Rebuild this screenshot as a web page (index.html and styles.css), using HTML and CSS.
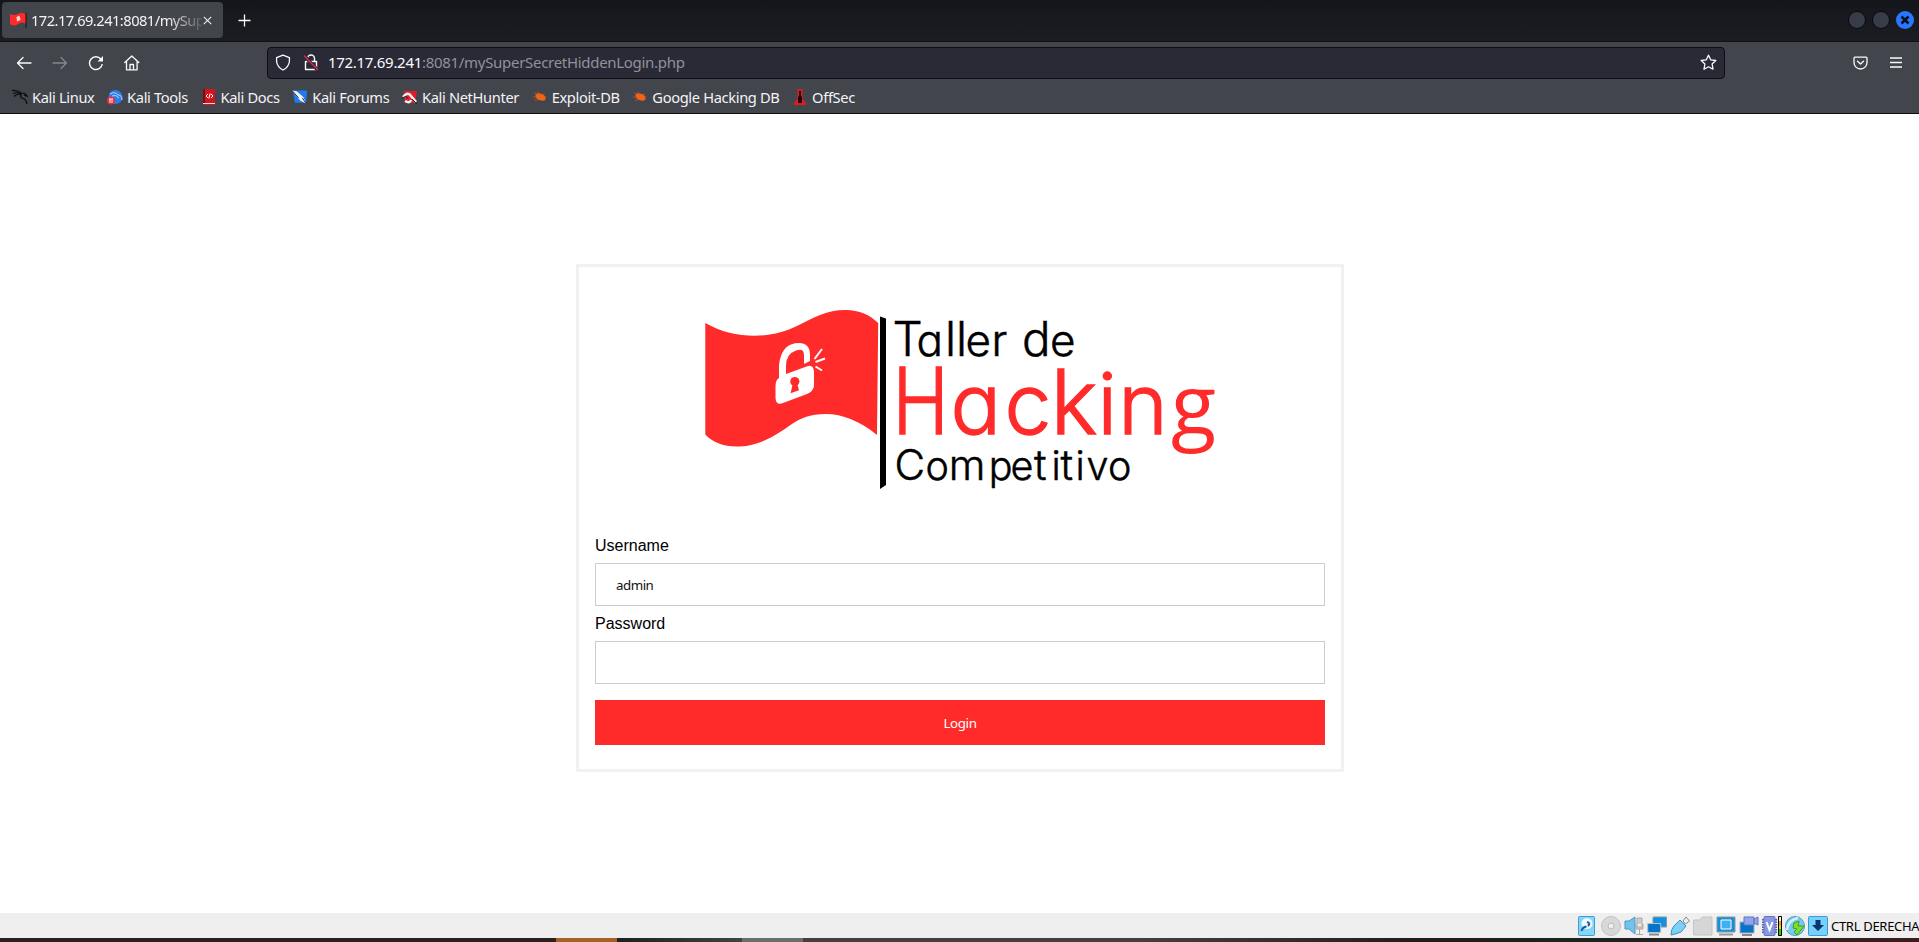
FILE: index.html
```html
<!DOCTYPE html>
<html lang="es">
<head>
<meta charset="utf-8">
<title>Taller de Hacking Competitivo</title>
<link rel="stylesheet" href="styles.css">
</head>
<body>
<header class="titlebar">
  <div class="tab">
    <svg class="favicon" width="17" height="17" viewBox="0 0 17 17"><path d="M0 2Q5 4 8 2T16 2V12Q12 9 8 12T0 12Z" fill="#ff2b2b"/><path d="M16 1V16" stroke="#111"/><path d="M6.500 5.500q2-3 3.500-.5l.5 3-3.500 1.500z" fill="#ffd0d0"/></svg>
    <span class="tab-title">172.17.69.241:8081/mySup</span>
    <svg class="tab-close" width="9" height="9" viewBox="0 0 9 9"><path d="M.8.8l7.400 7.400M8.200.8L.8 8.200" stroke="#e8e8ea" stroke-width="1.200"/></svg>
  </div>
  <svg class="newtab" width="13" height="13" viewBox="0 0 13 13"><path d="M6.500.5v12M.5 6.500h12" stroke="#fbfbfe" stroke-width="1.300"/></svg>
  <div class="window-buttons">
    <i class="dot"></i><i class="dot"></i>
    <svg width="18" height="18" viewBox="0 0 18 18"><circle cx="9" cy="9" r="9" fill="#2777ff"/><path d="M5.500 5.500l7 7M12.500 5.500l-7 7" stroke="#0b1020" stroke-width="2.600"/></svg>
  </div>
</header>
<nav class="toolbar">
  <div class="nav-icons">
    <svg width="16" height="16" viewBox="0 0 16 16" fill="none" stroke="#fbfbfe" stroke-width="1.300" stroke-linecap="round" stroke-linejoin="round"><path d="M15 8H1.500M7 2.500L1.500 8 7 13.500"/></svg>
    <svg width="16" height="16" viewBox="0 0 16 16" fill="none" stroke="#85868b" stroke-width="1.300" stroke-linecap="round" stroke-linejoin="round"><path d="M1 8h13.500M9 2.500L14.500 8 9 13.500"/></svg>
    <svg width="16" height="16" viewBox="0 0 16 16" fill="none" stroke="#fbfbfe" stroke-width="1.400"><path d="M13 4.200A6.400 6.400 0 1 0 14.300 9"/><path d="M15 1v5.500H9.500z" fill="#fbfbfe" stroke="none"/></svg>
    <svg width="16" height="16" viewBox="0 0 16 16" fill="none" stroke="#fbfbfe" stroke-width="1.300" stroke-linejoin="round" stroke-linecap="round"><path d="M.8 7.500L7.800 1l7 6.500M2.500 6.500v8.300h10.600V6.500M6 14.500V9.500h3.500v5"/></svg>
  </div>
  <div class="urlbar">
    <svg width="16" height="17" viewBox="0 0 16 17" fill="none" stroke="#fbfbfe" stroke-width="1.300"><path d="M8 1.200L14.400 3.600V7.500Q13.800 13 8 16 2.200 13 1.600 7.500V3.600Z" stroke-linejoin="round"/></svg>
    <svg class="lock" width="16" height="17" viewBox="0 0 16 17" fill="none" stroke="#fbfbfe" stroke-width="1.400"><path d="M4.500 7V4.500a3.500 3.500 0 0 1 7 0V7M2.500 7.500h11v8h-11z" stroke-linejoin="round"/><path d="M1 1.500L14.500 16" stroke="#292a36" stroke-width="3.400"/><path d="M1 1.500L15 16" stroke="#e22850" stroke-width="1.400"/></svg>
    <span class="url"><b>172.17.69.241</b>:8081/mySuperSecretHiddenLogin.php</span>
    <svg class="star" width="17" height="17" viewBox="0 0 17 17" fill="none" stroke="#fbfbfe" stroke-width="1.300" stroke-linejoin="round"><path d="M8.500 1.200L10.700 5.800 15.800 6.500 12.100 10 13 15.200 8.500 12.700 4 15.200 4.900 10 1.200 6.500 6.300 5.800Z"/></svg>
  </div>
  <svg class="pocket" width="15" height="14" viewBox="0 0 15 14" fill="none" stroke="#fbfbfe" stroke-width="1.300" stroke-linecap="round" stroke-linejoin="round"><path d="M2 1.200h11q1 0 1 1V6.500a6.500 6.500 0 0 1-13 0V2.200q0-1 1-1zM4.500 5.200l3 2.800 3-2.800"/></svg>
  <svg class="burger" width="12" height="11" viewBox="0 0 12 11"><path d="M0 1h12M0 5.500h12M0 10h12" stroke="#fbfbfe" stroke-width="1.300"/></svg>
</nav>
<div class="bookmarks">
  <a><svg width="16" height="16" viewBox="0 0 16 16" fill="none" stroke="#0b0b0d" stroke-width="1.200"><path d="M0 1.500q5-.5 9 2.500M1 4.500q4-1.500 8 0M2 7.500q3-3 7-2-1 3.500 2 4t4 5.500M9 4l4 .5 2 2.500-3-.8"/></svg><span>Kali Linux</span></a>
  <a><svg width="16" height="16" viewBox="0 0 16 16"><circle cx="8.500" cy="8" r="7" fill="#2b7de9"/><path d="M3 5q5-3 8 1 4 0 4 5M5 7q4-2 7 2" fill="none" stroke="#b8d8ff"/><circle cx="4" cy="11.500" r="4" fill="#e5303c"/><path d="M2 10h4M3 10V14M5 10V14" stroke="#fff" stroke-width=".9"/></svg><span>Kali Tools</span></a>
  <a><svg width="16" height="16" viewBox="-1 0 16 16"><path d="M1 0h12v16H1z" fill="#d4131d"/><path d="M1 0h2v14H1z" fill="#7e0c13"/><path d="M1 14h12V15H1z" fill="#ddd"/><path d="M6 5L4 7l2 2M9 5L11 7 9 9M8.200 4.500L6.800 9.500" fill="none" stroke="#fff"/></svg><span>Kali Docs</span></a>
  <a><svg width="16" height="16" viewBox="0 0 17 16"><path d="M1 1h15l-1 13H3z" fill="#1f7cf0"/><path d="M0 1l5 1 7 6 3 7-6-3-6-7z" fill="#f4f4f4"/><path d="M0 1l7 8M11 9l4 6" fill="none" stroke="#222"/></svg><span>Kali Forums</span></a>
  <a><svg width="16" height="16" viewBox="0 0 16 16"><path d="M2 2h13l-2 12H3z" fill="#e11d2c"/><path d="M1 8q5-6 8-1l5 6M3 12q5 3 6-1" fill="none" stroke="#eee" stroke-width="2.600"/><path d="M0 9q4-3 6 0M10 10l5 5" fill="none" stroke="#222"/></svg><span>Kali NetHunter</span></a>
  <a><svg width="16" height="16" viewBox="-1 0 16 16"><ellipse cx="7.500" cy="8" rx="5.500" ry="3.200" transform="rotate(25 7.500 8)" fill="#f06414"/><path d="M1 3.500l3 2M5 2.500l1 3M0 8h4M2 11.500l3-1M9 5.500l3-.5M13 7.500h-2" stroke="#b85b28" stroke-width=".8"/></svg><span>Exploit-DB</span></a>
  <a><svg width="16" height="16" viewBox="-1 0 16 16"><ellipse cx="7.500" cy="8" rx="5.500" ry="3.200" transform="rotate(25 7.500 8)" fill="#f06414"/><path d="M1 3.500l3 2M5 2.500l1 3M0 8h4M2 11.500l3-1M9 5.500l3-.5M13 7.500h-2" stroke="#b85b28" stroke-width=".8"/></svg><span>Google Hacking DB</span></a>
  <a><svg width="16" height="16" viewBox="-1.500 0 16 16"><path d="M4 0h5v9l4 6v1H0v-1l4-6z" fill="#d81e22"/><path d="M5.500 2h2v5l1 1v6h-4V8l1-1z" fill="#250608"/></svg><span>OffSec</span></a>
</div>
<main class="page">
  <form class="login">
    <svg class="logo" width="730" height="253" viewBox="595 283 730 253">
      <path d="M705.300 323C735 340 771 339 797 326C815 317 826 310 846 310C859 310 870 315 878.200 323L877 435C860 421 842 414 826 414C810 414 800 418 789 426C767 442 751 446.500 737 446.500C723 446.500 712 442 705.300 434.500Z" fill="#ff2b2b"/>
      <path d="M880 316.500l6 2v166.500l-6 4z"/>
      <path d="M779 378V365Q781 346 795 343.300Q810 341 810 355V361L804 364V355Q804 348 796 350.500Q786 354 786 366V374L808 366Q813.500 364.500 814 372V386Q813.500 391 807 394L783 403Q776 406 775.500 398V386Q775.500 380 779 378Z" fill="#fff"/>
      <circle cx="794.800" cy="381.500" r="4.600" fill="#ff2b2b"/><path d="M793 383h4l2 7.300-8.500 3z" fill="#ff2b2b"/>
      <path d="M814.500 359L822 349M815.500 362L825 358.500M815.500 366.500L822 370.500" stroke="#fff" stroke-width="2"/>
      <text class="black" font-size="47.500" x="892.500 916.500 945 956 965.500 991.500 1008.500 1022 1050" y="356">T<tspan font-size="44">a</tspan>ll<tspan font-size="44">er</tspan> d<tspan font-size="44">e</tspan></text>
      <text class="red" font-size="91.500" transform="translate(892.500 434.300) scale(.83 1)">H</text>
      <text class="red" font-size="84" x="950.500 1004.500 1050.500 1097.500 1118.300" y="434.300">ac<tspan font-size="89">k</tspan>in</text>
      <text class="red two-storey" font-size="83" x="1171" y="434">g</text>
      <text class="black" font-size="39.500" x="894.500 925.500 948.800 988.800 1010.500 1034 1051.500 1060.500 1075.500 1086.500 1108" y="479.600"><tspan font-size="42">C</tspan>o<tspan font-size="42">m</tspan>pe<tspan font-size="42">t</tspan>i<tspan font-size="42">t</tspan>ivo</text>
    </svg>
    <label>Username</label>
    <div class="field">admin</div>
    <label>Password</label>
    <div class="field"></div>
    <div class="button">Login</div>
  </form>
</main>
<footer class="statusbar">
  <svg width="20" height="20" viewBox="0 0 20 20"><rect x=".5" y=".5" width="16" height="19" rx="1" fill="#86d5f8" stroke="#3a9fd3"/><circle cx="9" cy="7.500" r="5.500" fill="#eef9ff"/><path d="M3.500 15q1-4 5-4.500M9 6q4 1 1 4" fill="none" stroke="#165c9e" stroke-width="2"/></svg>
  <svg width="20" height="20" viewBox="0 0 20 20"><circle cx="10" cy="10" r="9.500" fill="#d8d8d8" stroke="#c2c2c2"/><circle cx="10" cy="10" r="3" fill="#eee" stroke="#bbb"/></svg>
  <svg width="20" height="20" viewBox="0 0 20 20"><path d="M1 5h4l6-4v17l-6-5H1z" fill="#6fc3ee" stroke="#5095bd"/><path d="M13 2h5v9h-5zM12 8v5h7V8M15.500 13v5M12 18.500h7" fill="#ccc" stroke="#aaa"/></svg>
  <svg width="20" height="20" viewBox="0 0 20 20"><path d="M6 1h13.500v10H6z" fill="#1290df" stroke="#8798a3"/><path d="M.7 7.500h13v9H.7z" fill="#0874c9" stroke="#b7c4cc"/><path d="M2 18.500h10" stroke="#888" stroke-width="2"/></svg>
  <svg width="20" height="20" viewBox="0 0 20 20"><path d="M13 5l3-4 3.500 4-4 3z" fill="#eee" stroke="#888"/><path d="M10 4l6 6-5 6q-5 2-10 3 0-6 3-9z" fill="#7ed0f6" stroke="#3d91bd"/></svg>
  <svg width="20" height="20" viewBox="0 0 20 20"><path d="M.5 19V4h6l3-3h9.500v18z" fill="#d6d6d6" stroke="#c4c4c4"/></svg>
  <svg width="20" height="20" viewBox="0 0 20 20"><path d="M1 1h18v15H1z" fill="#168fd7" stroke="#8798a3"/><path d="M5 4h10v9H5z" fill="#40b0f0" stroke="#fff"/><path d="M3 18.500h14" stroke="#999" stroke-width="2"/></svg>
  <svg width="20" height="20" viewBox="0 0 20 20"><path d="M1 6h14v11H1z" fill="#0874c9" stroke="#aab"/><path d="M5 1h10v8H5zM15 3l4-2v8l-4-2z" fill="#91a5ef" stroke="#6574ba"/><path d="M3 19h10" stroke="#888" stroke-width="2"/></svg>
  <svg width="20" height="20" viewBox="0 0 20 20"><path d="M1 3v15M14 3v15" stroke="#555da5" stroke-width="2" stroke-dasharray="1.500 1"/><rect x="2" y=".5" width="11" height="19" rx="1" fill="#8797e8" stroke="#6674bf"/><path d="M4.500 6l3 8 3-8" fill="none" stroke="#fff" stroke-width="2"/><path d="M16.500.5h3v19h-3z" fill="#20d800" stroke="#000"/><path d="M17 1h2v4h-2z" fill="#eee"/><path d="M17 5h2v5h-2z" fill="#f8a500"/><path d="M17 10h2v3h-2z" fill="#e5e000"/></svg>
  <svg width="20" height="20" viewBox="0 0 20 20"><circle cx="10" cy="10" r="9.500" fill="#76c9ef" stroke="#4d9ec7"/><path d="M2 14Q3 4 13 2" fill="none" stroke="#d5f1ff" stroke-width="2.500"/><path d="M9 7l5-2-1 5 6 0-7 9-3-3 3-3-4-1z" fill="#7be22a" stroke="#469c1b"/></svg>
  <svg width="20" height="20" viewBox="0 0 20 20"><rect x=".5" y=".5" width="19" height="19" rx="1" fill="#75d0fa" stroke="#399bd1"/><path d="M7.500 4h5v5H16l-6 6-6-6h3.500z" fill="#07366f"/></svg>
  <span>CTRL DERECHA</span>
</footer>
<div class="taskbar"><i class="task-orange"></i><i class="task-dark"></i><i class="task-gray"></i><i class="task-rest"></i></div>
</body>
</html>
```

FILE: styles.css
```css
* { box-sizing: border-box; }
body { margin: 0; width: 1919px; height: 942px; overflow: hidden; display: flex; flex-direction: column; background: #fff; font-family: "Noto Sans", sans-serif; }
svg { display: block; flex: none; }
.titlebar { height: 42px; flex: none; display: flex; align-items: flex-start; padding: 2px 5px 0 2px; background: linear-gradient(#15161b, #1c1d22); border-bottom: 1px solid #101115; }
.tab { width: 221px; height: 36px; display: flex; align-items: center; padding-left: 8px; border-radius: 4px; background: #43454c; }
.favicon { margin-right: 4px; }
.tab-title { width: 171px; white-space: nowrap; font-size: 14.670px; letter-spacing: -.52px; color: #f3f3f6; -webkit-mask-image: linear-gradient(to right, #000 136px, transparent 176px); mask-image: linear-gradient(to right, #000 136px, transparent 176px); }
.tab-close { margin-left: 1px; }
.newtab { margin: 12px 0 0 15px; }
.window-buttons { display: flex; align-items: center; gap: 6px; margin: 9px 0 0 auto; }
.dot { width: 18px; height: 18px; border: 1px solid #08090b; border-radius: 50%; background: #383c48; }
.toolbar { height: 41px; flex: none; display: flex; align-items: center; background: #43454c; }
.nav-icons { display: flex; gap: 20px; width: 267px; padding-left: 16px; }
.urlbar { display: flex; align-items: center; width: 1458px; height: 32px; padding: 0 7px; border: 1px solid #0e0f13; border-radius: 4px; background: #292a36; }
.lock { margin-left: 12px; }
.url { margin: -2px 0 0 9px; font-size: 15px; letter-spacing: -.3px; color: #909199; }
.url b { font-weight: 400; color: #fbfbfe; }
.star { margin-left: auto; }
.pocket { margin-left: 128px; }
.burger { margin-left: 22px; }
.bookmarks { height: 31px; flex: none; display: flex; align-items: flex-start; padding: 5px 0 0 12px; gap: 12.600px; background: #43454c; border-bottom: 1px solid #0d0e11; }
.bookmarks a { display: flex; align-items: center; gap: 4px; height: 18px; font-size: 14.670px; letter-spacing: -.35px; color: #f3f3f6; white-space: nowrap; }
.page { height: 799px; flex: none; padding: 150px 0 0 576px; font-family: "Liberation Sans", Arial, sans-serif; }
.login { width: 768px; height: 508px; padding: 16px; border: 3px solid #f1f1f1; }
.logo text { font-family: Inter, sans-serif; font-weight: 300; font-feature-settings: "cv11"; }
.logo .black { fill: #000; stroke: #000; stroke-width: .5px; }
.logo .red { fill: #ff2b2b; stroke: #ff2b2b; stroke-width: 1.300px; }
.logo .two-storey { font-family: "Open Sans", sans-serif; font-weight: 400; stroke: none; }
.login label { display: block; height: 19px; line-height: 19px; font-size: 16px; }
.field { height: 43px; margin: 8px 0; padding: 0 20px; border: 1px solid #ccc; font: 13.330px/42px "Noto Sans", sans-serif; letter-spacing: -.5px; color: #111; }
.button { height: 45px; margin-top: 16px; background: #ff2b2b; color: #fff; text-align: center; font: 13.330px/46px "Noto Sans", sans-serif; letter-spacing: -.35px; }
.statusbar { height: 25px; flex: none; display: flex; align-items: center; gap: 3px; padding-left: 1578px; background: #efefef; font-size: 13px; letter-spacing: -.3px; color: #000; white-space: nowrap; overflow: hidden; }
.taskbar { height: 4px; flex: none; display: flex; padding-left: 556px; background: #2a211d; }
.task-orange { width: 61px; background: #a86125; }
.task-dark { width: 125px; background: linear-gradient(to right, #1e211f, #414441); }
.task-gray { width: 61px; background: #6c6e6a; }
.task-rest { flex: 1; background: linear-gradient(to right, #473f3d, #473f3d 30%, #211d1b 55%, #1e2220 70%, #3a1e20); }
```
